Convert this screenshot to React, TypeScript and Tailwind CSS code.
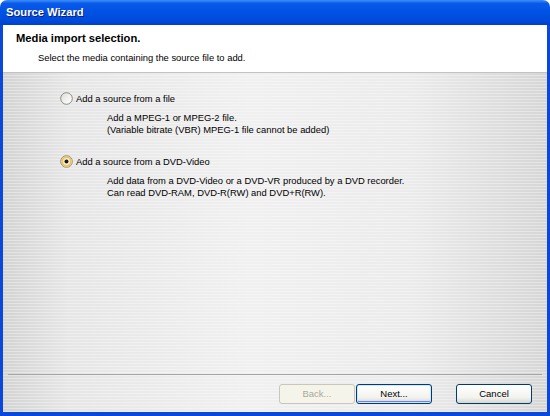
import React from "react";

const font = "font-['Liberation_Sans',Arial,sans-serif]";

function Radio({ checked }: { checked?: boolean }) {
  return (
    <svg width="13" height="13" viewBox="0 0 13 13" className="shrink-0">
      <defs>
        <linearGradient id={checked ? "rg1" : "rg0"} x1="0" y1="0" x2="1" y2="1">
          <stop offset="0" stopColor="#dcdcd6" />
          <stop offset="0.6" stopColor="#f4f4f0" />
          <stop offset="1" stopColor="#ffffff" />
        </linearGradient>
      </defs>
      <circle cx="6.5" cy="6.5" r="5.8" fill={`url(#${checked ? "rg1" : "rg0"})`} stroke="#8a8a8a" strokeWidth="1" />
      {checked && (
        <>
          <circle cx="6.5" cy="6.5" r="4.3" fill="none" stroke="#f7c33e" strokeWidth="1.8" />
          <circle cx="6.5" cy="6.5" r="2" fill="#1c1c10" />
        </>
      )}
    </svg>
  );
}

function Option({
  checked,
  label,
  lines,
}: {
  checked?: boolean;
  label: string;
  lines: string[];
}) {
  return (
    <div className="flex flex-col">
      <div className="flex items-center gap-[3px]">
        <Radio checked={checked} />
        <span className="text-[9.4px] leading-[12px] text-black">{label}</span>
      </div>
      <div className="mt-[7px] pl-[47px] text-[9.4px] leading-[12px] text-black">
        {lines.map((l, i) => (
          <p key={i}>{l}</p>
        ))}
      </div>
    </div>
  );
}

function Button({
  children,
  disabled,
  focused,
}: {
  children: React.ReactNode;
  disabled?: boolean;
  focused?: boolean;
}) {
  return (
    <button
      className={`h-[20px] w-[76px] rounded-[3px] border text-[9.5px] ${
        disabled
          ? "border-[#c9c7ba] bg-[#f5f4ea] text-[#aca899]"
          : "border-[#003c74] bg-[linear-gradient(180deg,#ffffff,#f2f2ee_70%,#d8d6cc)] text-black"
      } ${focused ? "shadow-[inset_0_0_0_1px_#cee7ff,inset_0_-1px_0_1px_#6982ee]" : ""}`}
    >
      {children}
    </button>
  );
}

export default function App() {
  return (
    <div className={`flex h-[416px] w-[550px] flex-col bg-white ${font}`}>
      <div className="flex h-[25px] shrink-0 items-center rounded-t-[7px] bg-[linear-gradient(180deg,#3d8ef8_0%,#0a5aea_14%,#0052e3_50%,#004ada_82%,#0040cc_100%)] pl-[6px]">
        <span className="text-[11.2px] font-bold text-white [text-shadow:1px_1px_0_#0a1e7a]">
          Source Wizard
        </span>
      </div>
      <div className="flex flex-1 flex-col border-x-[3px] border-b-[4px] border-[#0a48dc]">
        <div className="h-[48px] shrink-0 border-b border-[#c2c2c2] bg-white pt-[6px] pl-[13px]">
          <p className="text-[11.2px] font-bold leading-[14px] text-black">Media import selection.</p>
          <p className="mt-[7px] pl-[22px] text-[9.4px] leading-[12px] text-black">
            Select the media containing the source file to add.
          </p>
        </div>
        <div className="flex flex-1 flex-col bg-[image:repeating-linear-gradient(0deg,rgba(255,255,255,0.35)_0px,rgba(255,255,255,0.35)_1px,transparent_1px,transparent_3px),linear-gradient(90deg,#d3d3d3,#e6e6e6_12%,#f0f0f0_45%,#ebebeb_75%,#d6d6d6)]">
          <div className="flex flex-1 flex-col gap-[19px] pt-[19px] pl-[57px]">
            <Option
              label="Add a source from a file"
              lines={[
                "Add a MPEG-1 or MPEG-2 file.",
                "(Variable bitrate (VBR) MPEG-1 file cannot be added)",
              ]}
            />
            <Option
              checked
              label="Add a source from a DVD-Video"
              lines={[
                "Add data from a DVD-Video or a DVD-VR produced by a DVD recorder.",
                "Can read DVD-RAM, DVD-R(RW) and DVD+R(RW).",
              ]}
            />
          </div>
          <div className="mx-[5px] h-[2px] border-t border-[#a5a5a5] border-b-white" />
          <div className="flex justify-end gap-[24px] pt-[8px] pr-[15px] pb-[8px]">
            <div className="flex gap-[1px]">
              <Button disabled>Back...</Button>
              <Button focused>Next...</Button>
            </div>
            <Button>Cancel</Button>
          </div>
        </div>
      </div>
    </div>
  );
}
